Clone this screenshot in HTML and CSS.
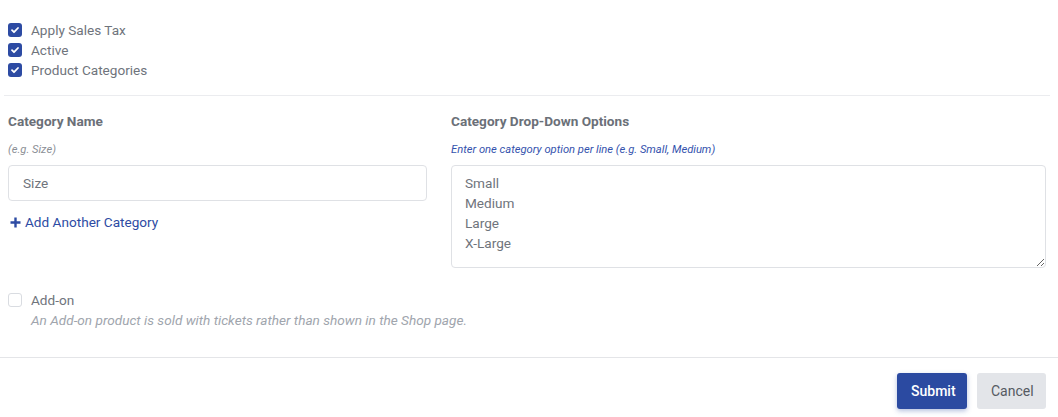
FILE: index.html
```html
<!DOCTYPE html>
<html>
<head>
<meta charset="utf-8">
<link rel="stylesheet" href="styles.css">
</head>
<body>
<div class="form">
  <div class="checks">
    <label class="check"><span class="box on"><svg viewBox="0 0 14 14" width="14" height="14"><path d="M4 7.2l2 2 4-4.2" fill="none" stroke="#fff" stroke-width="1.8" stroke-linecap="round" stroke-linejoin="round"/></svg></span>Apply Sales Tax</label>
    <label class="check"><span class="box on"><svg viewBox="0 0 14 14" width="14" height="14"><path d="M4 7.2l2 2 4-4.2" fill="none" stroke="#fff" stroke-width="1.8" stroke-linecap="round" stroke-linejoin="round"/></svg></span>Active</label>
    <label class="check"><span class="box on"><svg viewBox="0 0 14 14" width="14" height="14"><path d="M4 7.2l2 2 4-4.2" fill="none" stroke="#fff" stroke-width="1.8" stroke-linecap="round" stroke-linejoin="round"/></svg></span>Product Categories</label>
  </div>
  <hr class="divider">
  <div class="cols">
    <div class="col">
      <div class="label">Category Name</div>
      <div class="hint">(e.g. Size)</div>
      <input class="input" type="text" value="Size">
      <a class="add"><svg viewBox="0 0 11 11" width="11" height="11"><path d="M5.5 0.5v10M0.5 5.5h10" stroke="#2d4ba3" stroke-width="2.4"/></svg>Add Another Category</a>
    </div>
    <div class="col">
      <div class="label">Category Drop-Down Options</div>
      <div class="hint blue">Enter one category option per line (e.g. Small, Medium)</div>
      <textarea class="area">Small
Medium
Large
X-Large</textarea>
    </div>
  </div>
  <div class="addon">
    <label class="check"><span class="box off"></span>Add-on</label>
    <div class="desc">An Add-on product is sold with tickets rather than shown in the Shop page.</div>
  </div>
</div>
<div class="footer">
  <button class="btn submit">Submit</button>
  <button class="btn cancel">Cancel</button>
</div>
</body>
</html>
```
FILE: styles.css
```css
* { box-sizing: border-box; }
body {
  margin: 0;
  font-family: Roboto, "Liberation Sans", sans-serif;
  color: #6f747c;
  background: #fff;
}
.form {
  padding: 20px 12px 0 8px;
}
.checks {
  display: flex;
  flex-direction: column;
}
.check {
  display: flex;
  align-items: center;
  height: 20px;
  font-size: 13.6px;
  color: #6f747c;
}
.box {
  width: 14px;
  height: 14px;
  border-radius: 3px;
  margin-right: 9px;
  display: flex;
  flex: none;
}
.box.on { background: #2d4ba3; }
.box.off { border: 1px solid #d9dce1; background: #fff; }
.divider {
  border: 0;
  border-top: 1px solid #ebecef;
  margin: 15px -4px 0 -4px;
}
.cols {
  display: grid;
  grid-template-columns: 419px 1fr;
  column-gap: 24px;
  margin-top: 16px;
}
.label {
  font-size: 13.6px;
  font-weight: 700;
  line-height: 18px;
  color: #6b7078;
}
.hint {
  font-size: 11.2px;
  font-style: italic;
  line-height: 16px;
  margin: 12px 0 7px;
  color: #8a8e95;
}
.hint.blue { color: #3452ad; }
.input {
  display: block;
  width: 100%;
  height: 36px;
  border: 1px solid #dfe1e5;
  border-radius: 4px;
  padding: 0 14px;
  font: 13.6px Roboto, "Liberation Sans", sans-serif;
  color: #6f747c;
  outline: none;
}
.add {
  display: flex;
  align-items: center;
  margin-top: 11px;
  height: 20px;
  font-size: 13.6px;
  color: #2d4ba3;
}
.add svg { margin-right: 4px; margin-left: 2px; }
.area {
  display: block;
  width: 100%;
  height: 103px;
  border: 1px solid #dfe1e5;
  border-radius: 4px;
  padding: 7px 13px;
  font: 13.6px/20px Roboto, "Liberation Sans", sans-serif;
  color: #6f747c;
  resize: vertical;
  outline: none;
}
.addon {
  margin-top: 22px;
}
.desc {
  margin-left: 23px;
  font-size: 13.6px;
  font-style: italic;
  line-height: 21px;
  color: #a0a5ad;
}
.footer {
  margin-top: 26px;
  border-top: 1px solid #e4e5e8;
  padding: 15px 12px 8px 0;
  display: flex;
  justify-content: flex-end;
  gap: 10px;
}
.btn {
  height: 36px;
  border: 0;
  border-radius: 3px;
  font: 14px Roboto, "Liberation Sans", sans-serif;
  padding: 0 14px;
}
.submit {
  background: #2b4aa1;
  color: #fff;
  font-weight: 500;
  width: 70px;
  box-shadow: 0 2px 5px rgba(43, 74, 161, 0.35);
}
.cancel {
  background: #e3e5e9;
  color: #555a62;
  width: 69px;
}
```
